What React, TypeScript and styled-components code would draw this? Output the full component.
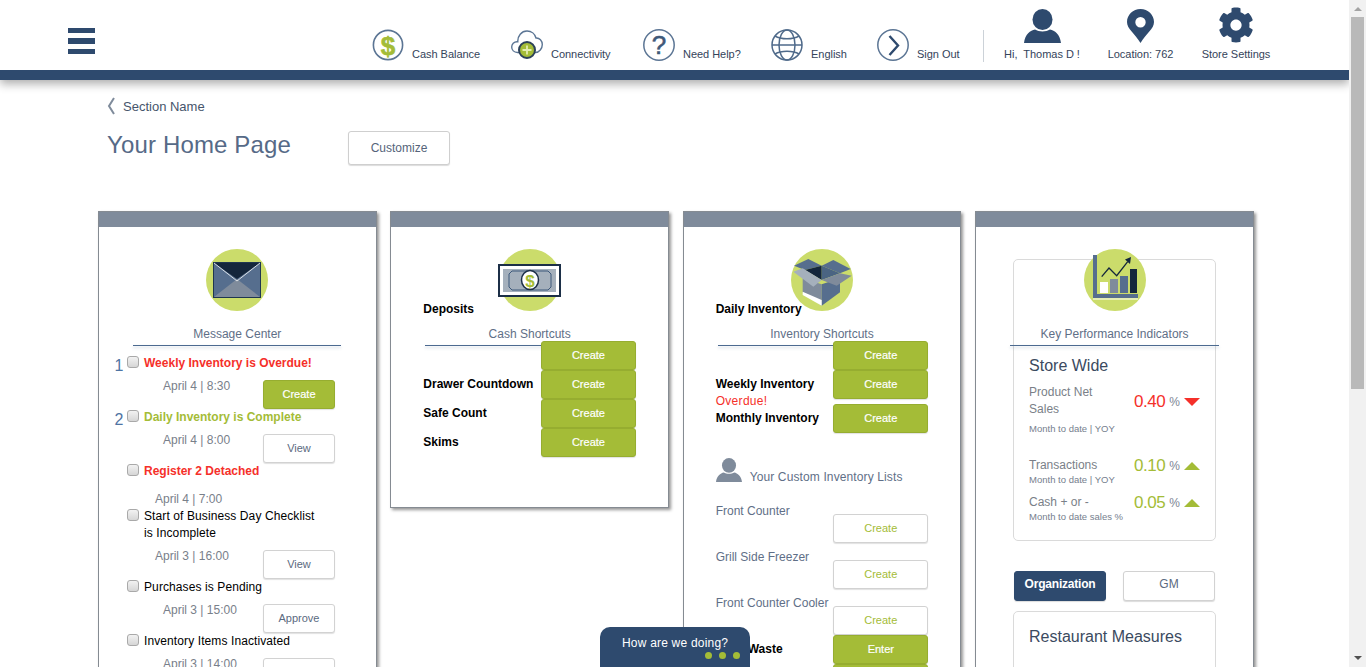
import React from "react";
import styled, { createGlobalStyle } from "styled-components";
import { FaCog } from "react-icons/fa";

const NAVY = "#2e4a6e";
const GREEN = "#a4bc37";
const RED = "#f5302a";
const SLATE = "#5f6f87";

const GlobalStyle = createGlobalStyle`
  html, body {
    margin: 0;
    padding: 0;
    height: 100%;
    overflow: hidden;
    background: #fff;
    font-family: "Liberation Sans", Arial, sans-serif;
    font-size: 12px;
  }
`;

const Frame = styled.div`
  display: flex;
  height: 100vh;
  overflow: hidden;
`;

const Main = styled.main`
  width: 1349px;
  flex: none;
  overflow: hidden;
`;

const Scrollbar = styled.div`
  flex: 1;
  display: flex;
  flex-direction: column;
  align-items: center;
  background: #f1f1f1;
`;

const ScrollArrow = styled.span<{ $down?: boolean }>`
  width: 0;
  height: 0;
  margin: ${(p) => (p.$down ? "auto 0 7px" : "7px 0 6px")};
  border-left: 4px solid transparent;
  border-right: 4px solid transparent;
  border-top: ${(p) => (p.$down ? "4px solid #505050" : "none")};
  border-bottom: ${(p) => (p.$down ? "none" : "4px solid #a3a3a3")};
`;

const ScrollThumb = styled.div`
  width: 13px;
  height: 372px;
  background: #b9b9b9;
`;

const Header = styled.header`
  position: relative;
  z-index: 2;
  background: #fff;
  border-bottom: 10px solid ${NAVY};
  box-shadow: 0 4px 9px rgba(0, 0, 0, 0.32);
`;

const TopBar = styled.div`
  display: flex;
  align-items: flex-end;
  box-sizing: border-box;
  height: 70px;
  padding: 0 0 9px 68px;
`;

const Burger = styled.div`
  display: grid;
  gap: 5px;
  width: 27px;
  margin: 0 277px 7px 0;
`;

const BurgerBar = styled.span`
  display: block;
  height: 5.3px;
  background: ${NAVY};
`;

const NavItem = styled.a<{ $w: number }>`
  display: flex;
  align-items: flex-end;
  width: ${(p) => p.$w}px;
  flex: none;
  gap: 8px;
`;

const NavLabel = styled.span`
  font-size: 11px;
  line-height: 14px;
  letter-spacing: -0.03px;
  color: #34435a;
  white-space: nowrap;
`;

const NavDivider = styled.span`
  width: 1px;
  height: 32px;
  margin-bottom: -1px;
  background: #ccd2d8;
  flex: none;
`;

const UserItem = styled.a<{ $w: number }>`
  display: flex;
  flex-direction: column;
  align-items: center;
  gap: 4px;
  width: ${(p) => p.$w}px;
  flex: none;
  color: ${NAVY};
`;

const SettingsCog = styled(FaCog)`
  margin-top: -2px;
`;

const Crumb = styled.div`
  display: flex;
  align-items: center;
  gap: 8px;
  height: 18px;
  margin: 17px 0 16px 107px;
  font-size: 13px;
  color: #46556b;
`;

const TitleRow = styled.div`
  display: flex;
  align-items: flex-start;
  margin: 0 0 46px 107px;
`;

const PageTitle = styled.h1`
  width: 241px;
  margin: 0;
  font-size: 24px;
  font-weight: 400;
  line-height: 28px;
  letter-spacing: 0.15px;
  color: #566a87;
`;

const CustomizeButton = styled.button`
  width: 102px;
  height: 34px;
  padding: 0;
  font: 12px "Liberation Sans", Arial, sans-serif;
  color: #55647a;
  background: #fff;
  border: 1px solid #cfcfcf;
  border-radius: 3px;
  box-shadow: 0 1px 1px rgba(0, 0, 0, 0.14);
`;

const Cards = styled.div`
  display: grid;
  grid-template-columns: repeat(4, 278.6px);
  gap: 13.75px;
  align-items: start;
  margin-left: 98px;
`;

const Card = styled.section<{ $height?: number }>`
  box-sizing: border-box;
  height: ${(p) => (p.$height ? `${p.$height}px` : "auto")};
  background: #fff;
  border: 1px solid #858b92;
  box-shadow: 2px 2px 3px rgba(0, 0, 0, 0.42);
`;

const CardCap = styled.div`
  height: 15px;
  background: #7f8b9b;
`;

const CardBody = styled.div<{ $top?: number }>`
  padding-top: ${(p) => p.$top ?? 22}px;
`;

const Emblem = styled.div`
  display: flex;
  justify-content: center;
  height: 62px;
`;

const TagSlot = styled.div`
  display: flow-root;
  height: 15px;
  padding-left: 32px;
`;

const Tag = styled.div`
  position: relative;
  margin-top: -10px;
  font-weight: 700;
  line-height: 17px;
  color: #000;
`;

const SectionTitle = styled.h2`
  margin: 0;
  font-size: 12px;
  font-weight: 400;
  line-height: 16px;
  text-align: center;
  color: ${SLATE};
`;

const Rule = styled.div<{ $wide?: boolean }>`
  height: 1px;
  margin: ${(p) => (p.$wide ? "3px -4px 0" : "3px 0 0 34px")};
  width: ${(p) => (p.$wide ? "auto" : "208px")};
  background: #4c6a90;
  box-shadow: 0 2px 3px rgba(76, 106, 144, 0.3);
`;

const Messages = styled.div`
  margin: 8px 0 0 14px;
  width: 222px;
`;

const Message = styled.div<{ $h: number }>`
  height: ${(p) => p.$h}px;
`;

const MessageHead = styled.div`
  display: flex;
  align-items: flex-start;
`;

const Rank = styled.span`
  width: 12px;
  height: 14px;
  flex: none;
  margin: 3px 2px 0 0;
  font-size: 16px;
  line-height: 18px;
  text-align: center;
  color: #4f74a3;
`;

const Tick = styled.input.attrs({ type: "checkbox" })`
  appearance: none;
  flex: none;
  box-sizing: border-box;
  width: 12px;
  height: 12px;
  margin: 2px 5px 0 0;
  border: 1px solid #a9a9a9;
  border-radius: 3px;
  background: linear-gradient(#f2f2f2, #d6d6d6);
`;

const MessageTitle = styled.div<{ $tone?: string }>`
  width: 178px;
  margin-top: 1px;
  line-height: 17px;
  font-weight: ${(p) => (p.$tone ? 700 : 400)};
  letter-spacing: ${(p) => (p.$tone ? "0" : "0.1px")};
  color: ${(p) => p.$tone ?? "#000"};
`;

const MessageMeta = styled.div<{ $top: number }>`
  display: flex;
  justify-content: space-between;
  align-items: flex-start;
  margin-top: ${(p) => p.$top}px;
`;

const MessageDate = styled.span<{ $indent: number }>`
  margin: 1px 0 0 ${(p) => p.$indent}px;
  line-height: 17px;
  color: #79808a;
`;

const Button = styled.button<{ $width: number; $solid?: boolean; $ink?: string }>`
  flex: none;
  box-sizing: border-box;
  width: ${(p) => p.$width}px;
  height: 29px;
  padding: 0 0 1px;
  font: 11px "Liberation Sans", Arial, sans-serif;
  color: ${(p) => (p.$solid ? "#fff" : p.$ink ?? "#5b6a80")};
  -webkit-text-stroke: ${(p) => (p.$solid ? "0.2px #fff" : "0")};
  background: ${(p) => (p.$solid ? GREEN : "#fff")};
  border: 1px solid ${(p) => (p.$solid ? "#96ad30" : "#d2d2d2")};
  border-radius: 3px;
  box-shadow: 0 1px 1px rgba(0, 0, 0, 0.12);
`;

const MessageAction = styled(Button)`
  margin-top: 3px;
`;

const Shortcuts = styled.div<{ $top?: number }>`
  position: relative;
  margin-top: ${(p) => p.$top ?? -5}px;
  padding: 0 32px;
`;

const ShortcutRow = styled.div<{ $after?: number }>`
  display: flex;
  justify-content: space-between;
  align-items: center;
  height: 29px;
  margin-bottom: ${(p) => p.$after ?? 0}px;
`;

const RowLabel = styled.span`
  margin-bottom: 2px;
  font-weight: 700;
  color: #000;
`;

const StackedLabel = styled.div`
  align-self: flex-start;
  padding-top: 6px;
  height: 23px;
  line-height: 17px;
`;

const OverdueNote = styled.div`
  color: ${RED};
  letter-spacing: 0.3px;
`;

const CustomHead = styled.div`
  display: flex;
  align-items: flex-end;
  gap: 8px;
  margin: 25px 0 0 32px;
  line-height: 14px;
  color: ${SLATE};
`;

const CustomHeadText = styled.span`
  margin-bottom: -2px;
  letter-spacing: 0.12px;
`;

const CustomList = styled.div`
  margin: 21px 32px -6px;
`;

const CustomRow = styled.div`
  display: flex;
  justify-content: space-between;
  align-items: flex-start;
  height: 46px;
  line-height: 17px;
  color: ${SLATE};
`;

const CustomAction = styled(Button)`
  margin-top: 11px;
`;

const Panel = styled.div<{ $top: number }>`
  box-sizing: border-box;
  width: 203px;
  margin: ${(p) => p.$top}px 0 0 37px;
  border: 1px solid #dadada;
  border-radius: 5px;
`;

const KpiLead = styled.div`
  margin-top: -11px;
`;

const PanelBody = styled.div`
  padding: 10px 15px 17px;
`;

const PanelTitle = styled.h3`
  margin: 0 0 8px;
  font-size: 16px;
  font-weight: 400;
  line-height: 20px;
  color: #3b4a60;
`;

const Kpi = styled.div<{ $top: number }>`
  display: grid;
  grid-template-columns: 105px 66px;
  align-items: start;
  margin-top: ${(p) => p.$top}px;
`;

const KpiName = styled.div`
  width: 80px;
  line-height: 17px;
  color: #7a7f88;
`;

const KpiNote = styled.div<{ $gap?: number }>`
  margin-top: ${(p) => p.$gap ?? 0}px;
  font-size: 9.5px;
  line-height: 12px;
  color: #76808e;
  white-space: nowrap;
`;

const KpiValue = styled.div<{ $drop?: number; $up?: boolean }>`
  display: flex;
  align-items: center;
  height: 17px;
  margin-top: ${(p) => p.$drop ?? 0}px;
  font-size: 17px;
  letter-spacing: -0.5px;
  color: ${(p) => (p.$up ? GREEN : RED)};
`;

const Percent = styled.span`
  margin: 0 4px 0 4px;
  font-size: 12px;
  letter-spacing: 0;
  color: #7d8694;
`;

const Trend = styled.span<{ $up?: boolean }>`
  width: 0;
  height: 0;
  border-left: 8px solid transparent;
  border-right: 8px solid transparent;
  border-top: ${(p) => (p.$up ? "none" : `8px solid ${RED}`)};
  border-bottom: ${(p) => (p.$up ? `8px solid ${GREEN}` : "none")};
`;

const Tabs = styled.div`
  display: flex;
  gap: 17px;
  margin: 30px 0 0 38px;
`;

const TabButton = styled.button<{ $active?: boolean }>`
  box-sizing: border-box;
  width: 92px;
  height: 30px;
  padding: 0 0 4px;
  font: ${(p) => (p.$active ? 700 : 400)} 12px "Liberation Sans", Arial, sans-serif;
  letter-spacing: ${(p) => (p.$active ? "-0.2px" : "0")};
  color: ${(p) => (p.$active ? "#fff" : "#5b6a80")};
  background: ${(p) => (p.$active ? NAVY : "#fff")};
  border: 1px solid ${(p) => (p.$active ? NAVY : "#d2d2d2")};
  border-radius: 3px;
  box-shadow: 0 1px 1px rgba(0, 0, 0, 0.14);
`;

const MeasuresBody = styled.div`
  padding: 15px 15px 30px;
`;

const Feedback = styled.div`
  position: fixed;
  left: 600px;
  bottom: 0;
  z-index: 3;
  box-sizing: border-box;
  width: 150px;
  height: 40px;
  padding: 8px 0 0 22px;
  font-size: 12px;
  line-height: 16px;
  letter-spacing: 0.2px;
  color: #fff;
  background: ${NAVY};
  border-radius: 10px 10px 0 0;
`;

const FeedbackDots = styled.div`
  display: flex;
  justify-content: flex-end;
  gap: 7px;
  margin: 1px 10px 0 0;
`;

const Dot = styled.span`
  width: 7px;
  height: 7px;
  border-radius: 50%;
  background: ${GREEN};
`;

const CashIcon = () => (
  <svg width="32" height="32" viewBox="0 0 32 32">
    <circle cx="16" cy="16" r="14.6" fill="#fff" stroke="#5b7594" strokeWidth="1.6" />
    <text
      x="16"
      y="25.5"
      textAnchor="middle"
      fontFamily="Liberation Sans"
      fontWeight="700"
      fontSize="26"
      fill={GREEN}
      stroke={GREEN}
      strokeWidth="0.6"
    >
      $
    </text>
  </svg>
);

const CloudIcon = () => (
  <svg width="32" height="32" viewBox="0 0 32 32">
    <path
      d="M9 23.500H6.500C3 23.500 .7 21 .7 18c0-3 2.300-5.300 5.300-5.300h.8C6.500 7 10.500 2 16 2c4.500 0 8 3 9 7 3.500-.3 6.300 2.700 6.300 6.500 0 4-3 8-7 8h-1"
      fill="#fff"
      stroke="#5b7594"
      strokeWidth="1.4"
    />
    <circle cx="16" cy="21" r="8" fill={GREEN} stroke="#2d4259" strokeWidth="2" />
    <path d="M16 16.500v9M11.500 21h9" stroke="#e3edb0" strokeWidth="1.800" />
  </svg>
);

const HelpIcon = () => (
  <svg width="32" height="32" viewBox="0 0 32 32">
    <circle cx="16" cy="16" r="15.2" fill="#fff" stroke="#5b7594" strokeWidth="1.5" />
    <text
      x="16"
      y="25"
      textAnchor="middle"
      fontFamily="Liberation Sans"
      fontSize="26"
      fill="#3f5979"
      stroke="#3f5979"
      strokeWidth="0.6"
    >
      ?
    </text>
  </svg>
);

const GlobeIcon = () => (
  <svg width="32" height="32" viewBox="0 0 32 32" fill="none" stroke="#4f6a8a" strokeWidth="1.500">
    <circle cx="16" cy="16" r="15" />
    <ellipse cx="16" cy="16" rx="8" ry="15" />
    <path d="M1 16h30M4 7c6 3.600 18 3.600 24 0M4 25c6-3.600 18-3.600 24 0" />
  </svg>
);

const ExitIcon = () => (
  <svg width="32" height="32" viewBox="0 0 32 32" fill="none">
    <circle cx="16" cy="16" r="15.2" stroke="#5b7594" strokeWidth="1.5" />
    <path d="M12.500 7l8.500 9.500-8.500 9.500" stroke="#2e4a6e" strokeWidth="2.400" />
  </svg>
);

const PersonGlyph = ({ w, h, fill }: { w: number; h: number; fill: string }) => (
  <svg width={w} height={h} viewBox="0 0 37 34" fill={fill}>
    <ellipse cx="18.500" cy="10.500" rx="10" ry="10.500" />
    <path d="M0 34c1-9 6.500-12.500 11-13.500 4 2.500 11 2.500 15 0C30.500 21.500 36 25 37 34z" />
  </svg>
);

const PinIcon = () => (
  <svg width="27" height="34" viewBox="0 0 27 34">
    <path
      fillRule="evenodd"
      fill={NAVY}
      d="M13.500 0C6 0 0 5.800 0 13c0 7 8 11.500 13.500 21C19 24.500 27 20 27 13 27 5.800 21 0 13.500 0zm0 8a5.200 5.200 0 1 1 0 10.400 5.200 5.200 0 0 1 0-10.400z"
    />
  </svg>
);

const EnvelopeEmblem = () => (
  <svg width="62" height="62" viewBox="0 0 62 62">
    <circle cx="31" cy="31" r="31" fill="#cbdc6b" />
    <rect x="7.500" y="13.500" width="47" height="35" fill="#566e8e" stroke="#1f3650" />
    <path d="M8 48l23-18 23 18z" fill="#7f8b9b" />
    <path d="M8 14h46L31 30z" fill="#14263c" />
    <path d="M8 14l23 18 23-18" fill="none" stroke="#e8ecef" strokeWidth="0.900" />
  </svg>
);

const BillEmblem = () => (
  <svg width="64" height="62" viewBox="0 0 64 62">
    <circle cx="32" cy="31" r="31" fill="#cbdc6b" />
    <rect x="1" y="16" width="61" height="31" fill="#fff" stroke="#1c2f47" strokeWidth="2" />
    <rect x="5" y="20" width="53" height="23" fill="#a5b0bc" />
    <path d="M14 22h36l3 3v13l-3 3H14l-3-3V25z" fill="none" stroke="#3d587a" strokeWidth="1" />
    <ellipse cx="32" cy="31" rx="8.500" ry="9.500" fill="#fff" stroke="#1c2f47" strokeWidth="1.500" />
    <text x="32" y="37.500" textAnchor="middle" fontFamily="Liberation Sans" fontWeight="700" fontSize="17" fill={GREEN}>
      $
    </text>
  </svg>
);

const BoxEmblem = () => (
  <svg width="62" height="62" viewBox="0 0 62 62">
    <circle cx="31" cy="31" r="31" fill="#cbdc6b" />
    <path d="M11.700 29.300l19 6v21.400l-19-13.400z" fill="#7f8b9b" />
    <path d="M30.700 35.300l18.300-6v14L30.700 56.700z" fill="#566e8e" />
    <path d="M11.700 42.700l19 8.300v5.700l-19-10.700z" fill="#fff" />
    <path d="M3 16.700l14.300-6.700 13.400 6.700L14 21z" fill="#566e8e" />
    <path d="M30.700 16.700L42.300 11l17.400 9L49 24.300z" fill="#566e8e" />
    <path d="M14 21l16.700-4.300V31z" fill="#14263c" />
    <path d="M30.700 16.700L49 24.300 30.700 31z" fill="#4a6482" />
    <path d="M2.300 22.700l9.400-3.400 19 11.700-8.400 6.700z" fill="#a5b0bc" />
    <path d="M30.700 31L49 24.300l11.700 2.400-15 10z" fill="#7f8b9b" />
  </svg>
);

const ChartEmblem = () => (
  <svg width="62" height="62" viewBox="0 0 62 62">
    <circle cx="31" cy="31" r="31" fill="#cbdc6b" />
    <path d="M11 6v41h43" fill="none" stroke="#566e8e" strokeWidth="4" />
    <path d="M9 50h45" stroke="#fff" strokeWidth="1" />
    <rect x="16" y="33" width="8" height="11" fill="#fff" />
    <rect x="26" y="30" width="8" height="14" fill="#7f8b9b" />
    <rect x="36" y="27" width="8" height="17" fill="#566e8e" />
    <rect x="46" y="20" width="7" height="24" fill="#14263c" />
    <path d="M17.700 27.700L25 19l7.700 7.700 11-14" fill="none" stroke="#14263c" strokeWidth="1.300" />
    <path d="M41 10.500l6-2.500-1 7z" fill="#14263c" />
  </svg>
);

interface IMessage {
  rank?: string;
  title: string;
  tone?: string;
  date: string;
  indent: number;
  top: number;
  height: number;
  action?: string;
  solid?: boolean;
}

const messages: IMessage[] = [
  { rank: "1", title: "Weekly Inventory is Overdue!", tone: RED, date: "April 4 | 8:30", indent: 50, top: 5, height: 54, action: "Create", solid: true },
  { rank: "2", title: "Daily Inventory is Complete", tone: GREEN, date: "April 4 | 8:00", indent: 50, top: 5, height: 54, action: "View" },
  { title: "Register 2 Detached", tone: RED, date: "April 4 | 7:00", indent: 42, top: 10, height: 45 },
  { title: "Start of Business Day Checklist is Incomplete", date: "April 3 | 16:00", indent: 42, top: 5, height: 71, action: "View" },
  { title: "Purchases is Pending", date: "April 3 | 15:00", indent: 50, top: 5, height: 54, action: "Approve" },
  { title: "Inventory Items Inactivated", date: "April 3 | 14:00", indent: 50, top: 5, height: 54, action: "View" },
];

const CardHeading: React.FC<{ emblem: React.ReactNode; tag?: string; title: string }> = ({ emblem, tag, title }) => (
  <>
    <Emblem>{emblem}</Emblem>
    <TagSlot>{tag && <Tag>{tag}</Tag>}</TagSlot>
    <SectionTitle>{title}</SectionTitle>
  </>
);

export default function App() {
  return (
    <Frame>
      <GlobalStyle />
      <Main>
        <Header>
          <TopBar>
            <Burger>
              <BurgerBar />
              <BurgerBar />
              <BurgerBar />
            </Burger>
            <NavItem $w={139}>
              <CashIcon />
              <NavLabel>Cash Balance</NavLabel>
            </NavItem>
            <NavItem $w={132}>
              <CloudIcon />
              <NavLabel>Connectivity</NavLabel>
            </NavItem>
            <NavItem $w={128}>
              <HelpIcon />
              <NavLabel>Need Help?</NavLabel>
            </NavItem>
            <NavItem $w={106}>
              <GlobeIcon />
              <NavLabel>English</NavLabel>
            </NavItem>
            <NavItem $w={106}>
              <ExitIcon />
              <NavLabel>Sign Out</NavLabel>
            </NavItem>
            <NavDivider />
            <UserItem $w={116}>
              <PersonGlyph w={37} h={34} fill={NAVY} />
              <NavLabel>Hi,&nbsp; Thomas D !</NavLabel>
            </UserItem>
            <UserItem $w={81}>
              <PinIcon />
              <NavLabel>Location: 762</NavLabel>
            </UserItem>
            <UserItem $w={110}>
              <SettingsCog size={36} />
              <NavLabel>Store Settings</NavLabel>
            </UserItem>
          </TopBar>
        </Header>

        <Crumb>
          <svg width="8" height="18" viewBox="0 0 8 18" fill="none">
            <path d="M7 1L2 9l5 8" stroke="#7f8b9b" strokeWidth="2" />
          </svg>
          Section Name
        </Crumb>
        <TitleRow>
          <PageTitle>Your Home Page</PageTitle>
          <CustomizeButton>Customize</CustomizeButton>
        </TitleRow>

        <Cards>
          <Card>
            <CardCap />
            <CardBody>
              <CardHeading emblem={<EnvelopeEmblem />} title="Message Center" />
              <Rule />
              <Messages>
                {messages.map((m) => (
                  <Message key={m.title} $h={m.height}>
                    <MessageHead>
                      <Rank>{m.rank}</Rank>
                      <Tick />
                      <MessageTitle $tone={m.tone}>{m.title}</MessageTitle>
                    </MessageHead>
                    <MessageMeta $top={m.top}>
                      <MessageDate $indent={m.indent}>{m.date}</MessageDate>
                      {m.action && (
                        <MessageAction $width={72} $solid={m.solid}>
                          {m.action}
                        </MessageAction>
                      )}
                    </MessageMeta>
                  </Message>
                ))}
              </Messages>
            </CardBody>
          </Card>

          <Card $height={297}>
            <CardCap />
            <CardBody>
              <CardHeading emblem={<BillEmblem />} tag="Deposits" title="Cash Shortcuts" />
              <Rule />
              <Shortcuts>
                <ShortcutRow>
                  <span />
                  <Button $width={95} $solid>Create</Button>
                </ShortcutRow>
                <ShortcutRow>
                  <RowLabel>Drawer Countdown</RowLabel>
                  <Button $width={95} $solid>Create</Button>
                </ShortcutRow>
                <ShortcutRow>
                  <RowLabel>Safe Count</RowLabel>
                  <Button $width={95} $solid>Create</Button>
                </ShortcutRow>
                <ShortcutRow>
                  <RowLabel>Skims</RowLabel>
                  <Button $width={95} $solid>Create</Button>
                </ShortcutRow>
              </Shortcuts>
            </CardBody>
          </Card>

          <Card>
            <CardCap />
            <CardBody>
              <CardHeading emblem={<BoxEmblem />} tag="Daily Inventory" title="Inventory Shortcuts" />
              <Rule />
              <Shortcuts>
                <ShortcutRow>
                  <span />
                  <Button $width={95} $solid>Create</Button>
                </ShortcutRow>
                <ShortcutRow $after={5}>
                  <StackedLabel>
                    <RowLabel>Weekly Inventory</RowLabel>
                    <OverdueNote>Overdue!</OverdueNote>
                  </StackedLabel>
                  <Button $width={95} $solid>Create</Button>
                </ShortcutRow>
                <ShortcutRow>
                  <RowLabel>Monthly Inventory</RowLabel>
                  <Button $width={95} $solid>Create</Button>
                </ShortcutRow>
              </Shortcuts>
              <CustomHead>
                <PersonGlyph w={26} h={24} fill="#7f8b9b" />
                <CustomHeadText>Your Custom Inventory Lists</CustomHeadText>
              </CustomHead>
              <CustomList>
                <CustomRow>
                  Front Counter
                  <CustomAction $width={95} $ink={GREEN}>Create</CustomAction>
                </CustomRow>
                <CustomRow>
                  Grill Side Freezer
                  <CustomAction $width={95} $ink={GREEN}>Create</CustomAction>
                </CustomRow>
                <CustomRow>
                  Front Counter Cooler
                  <CustomAction $width={95} $ink={GREEN}>Create</CustomAction>
                </CustomRow>
              </CustomList>
              <Shortcuts $top={0}>
                <ShortcutRow>
                  <RowLabel>Daily Waste</RowLabel>
                  <Button $width={95} $solid>Enter</Button>
                </ShortcutRow>
                <ShortcutRow>
                  <span />
                  <Button $width={95} $solid>Enter</Button>
                </ShortcutRow>
              </Shortcuts>
            </CardBody>
          </Card>

          <Card>
            <CardCap />
            <CardBody $top={0}>
              <Panel $top={32}>
                <KpiLead>
                  <CardHeading emblem={<ChartEmblem />} title="Key Performance Indicators" />
                </KpiLead>
                <Rule $wide />
                <PanelBody>
                  <PanelTitle>Store Wide</PanelTitle>
                  <Kpi $top={0}>
                    <div>
                      <KpiName>Product Net Sales</KpiName>
                      <KpiNote $gap={5}>Month to date | YOY</KpiNote>
                    </div>
                    <KpiValue $drop={9}>
                      0.40<Percent>%</Percent>
                      <Trend />
                    </KpiValue>
                  </Kpi>
                  <Kpi $top={22}>
                    <div>
                      <KpiName>Transactions</KpiName>
                      <KpiNote>Month to date | YOY</KpiNote>
                    </div>
                    <KpiValue $up>
                      0.10<Percent>%</Percent>
                      <Trend $up />
                    </KpiValue>
                  </Kpi>
                  <Kpi $top={8}>
                    <div>
                      <KpiName>Cash + or -</KpiName>
                      <KpiNote>Month to date sales %</KpiNote>
                    </div>
                    <KpiValue $up>
                      0.05<Percent>%</Percent>
                      <Trend $up />
                    </KpiValue>
                  </Kpi>
                </PanelBody>
              </Panel>
              <Tabs>
                <TabButton $active>Organization</TabButton>
                <TabButton>GM</TabButton>
              </Tabs>
              <Panel $top={10}>
                <MeasuresBody>
                  <PanelTitle>Restaurant Measures</PanelTitle>
                  <Kpi $top={18}>
                    <div />
                    <KpiValue>
                      0.00<Percent>%</Percent>
                      <Trend />
                    </KpiValue>
                  </Kpi>
                </MeasuresBody>
              </Panel>
            </CardBody>
          </Card>
        </Cards>
      </Main>
      <Scrollbar>
        <ScrollArrow />
        <ScrollThumb />
        <ScrollArrow $down />
      </Scrollbar>
      <Feedback>
        How are we doing?
        <FeedbackDots>
          <Dot />
          <Dot />
          <Dot />
        </FeedbackDots>
      </Feedback>
    </Frame>
  );
}
